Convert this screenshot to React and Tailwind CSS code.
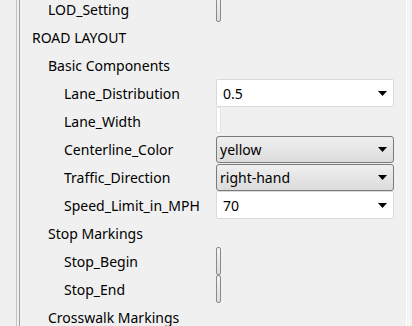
import React from 'react';

const Arrow = () => (
  <svg width="9" height="5" viewBox="0 0 9 5" className="shrink-0">
    <path d="M0 0 L9 0 L4.5 5 Z" fill="#000" />
  </svg>
);

const WhiteSelect = ({ value }) => (
  <div className="h-[28px] w-[178px] bg-white border border-[#dadada] rounded-[2px] flex items-center justify-between pl-[6px] pr-[6px]">
    <span>{value}</span>
    <Arrow />
  </div>
);

const GraySelect = ({ value }) => (
  <div className="h-[27px] w-[178px] border border-[#7a7a7a] rounded-[3px] bg-gradient-to-b from-[#efefef] to-[#dcdcdc] flex items-center justify-between pl-[3px] pr-[6px]">
    <span>{value}</span>
    <Arrow />
  </div>
);

const Slider = ({ className = '' }) => (
  <div className={`w-[5px] rounded-[2px] border border-[#8a8a8a] bg-gradient-to-b from-[#f4f4f4] to-[#dedede] ${className}`} />
);

const rows = [
  { label: 'LOD_Setting', indent: 16, control: <Slider className="h-[27px] self-start" /> },
  { label: 'ROAD LAYOUT', indent: 0 },
  { label: 'Basic Components', indent: 16 },
  { label: 'Lane_Distribution', indent: 32, control: <WhiteSelect value="0.5" /> },
  { label: 'Lane_Width', indent: 32, control: <div className="w-[5px] h-[26px] self-start bg-white border border-[#e3e3e3]" /> },
  { label: 'Centerline_Color', indent: 32, control: <GraySelect value="yellow" /> },
  { label: 'Traffic_Direction', indent: 32, control: <GraySelect value="right-hand" /> },
  { label: 'Speed_Limit_in_MPH', indent: 32, control: <WhiteSelect value="70" /> },
  { label: 'Stop Markings', indent: 16 },
  { label: 'Stop_Begin', indent: 32, control: <Slider className="h-[28px] self-end" /> },
  { label: 'Stop_End', indent: 32, control: <Slider className="h-[28px] self-start" /> },
  { label: 'Crosswalk Markings', indent: 16 },
];

export default function App() {
  return (
    <div
      className="w-[412px] h-[326px] overflow-hidden bg-[#f0f0f0] flex text-[14px] text-black"
      style={{ fontFamily: '"Segoe UI", "Noto Sans", "Open Sans", sans-serif' }}
    >
      <div className="w-[16px] shrink-0" />
      <div className="w-[1px] bg-[#c4c4c4] shrink-0" />
      <div className="w-[2px] shrink-0" />
      <div className="w-[1px] bg-[#a3a3a3] shrink-0" />
      <div className="flex-1 flex flex-col mt-[-5px] pl-[12px]">
        {rows.map((r) => (
          <div key={r.label} className="h-[28px] flex items-center shrink-0">
            <div className="w-[184px] shrink-0 whitespace-nowrap" style={{ paddingLeft: r.indent }}>
              {r.label}
            </div>
            <div className="h-full flex items-center">{r.control}</div>
          </div>
        ))}
      </div>
      <div className="w-[12px] shrink-0" />
      <div className="w-[1px] bg-white shrink-0" />
      <div className="w-[2px] bg-[#f4f4f4] shrink-0" />
      <div className="w-[1px] bg-[#fafafa] shrink-0" />
      <div className="w-[2px] shrink-0" />
    </div>
  );
}
